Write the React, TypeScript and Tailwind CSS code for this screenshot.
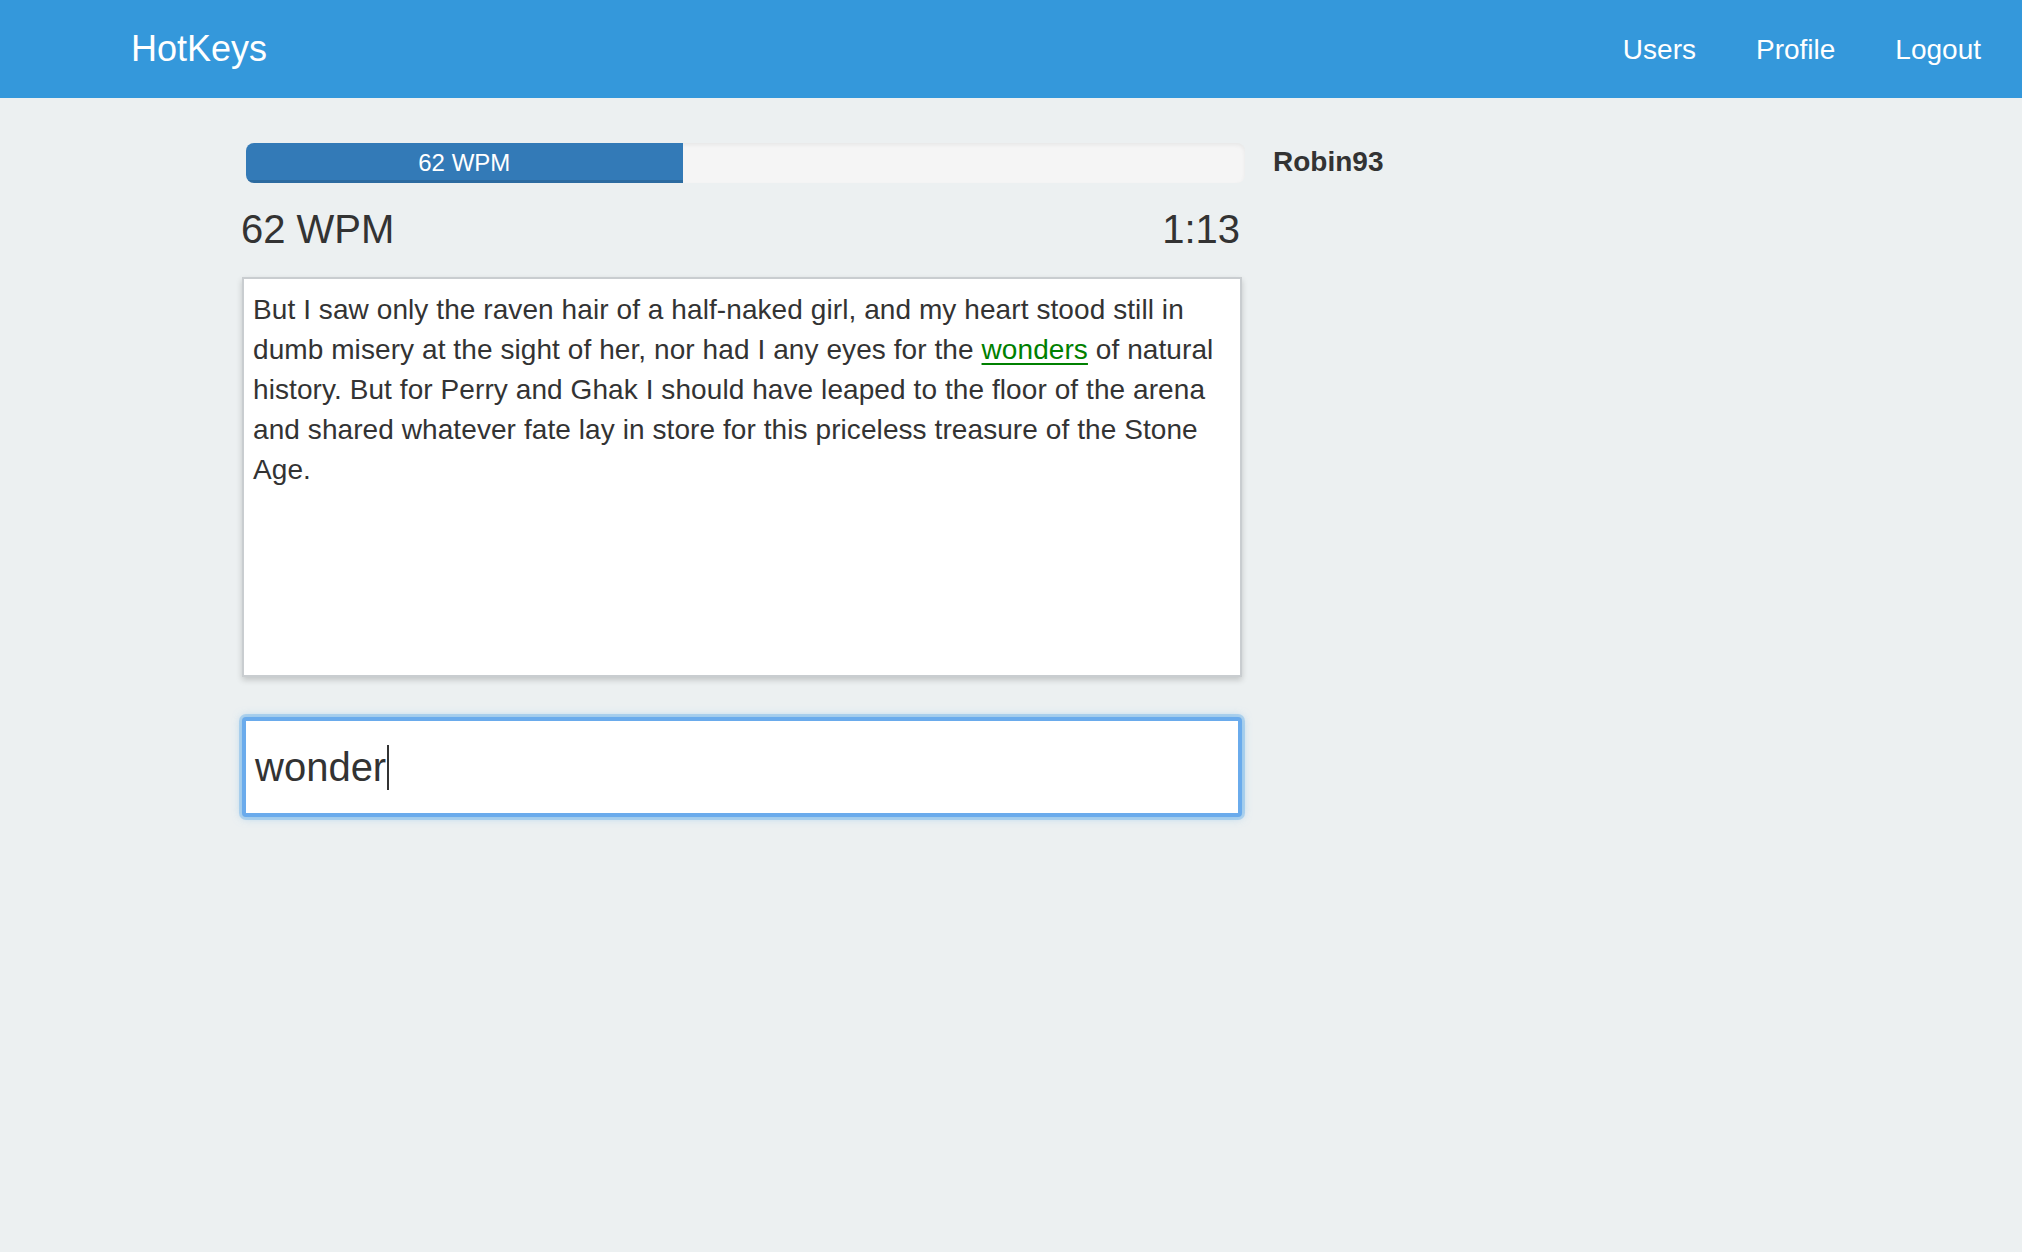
import React from 'react';

const font = { fontFamily: '"Liberation Sans", Arial, Helvetica, sans-serif' };

const passage = {
  before:
    'But I saw only the raven hair of a half-naked girl, and my heart stood still in dumb misery at the sight of her, nor had I any eyes for the ',
  current: 'wonders',
  after:
    ' of natural history. But for Perry and Ghak I should have leaped to the floor of the arena and shared whatever fate lay in store for this priceless treasure of the Stone Age.',
};

const Navbar = () => (
  <nav className="h-[98px] bg-[#3498db] flex items-center justify-between pl-[131px] pr-[11px]">
    <span className="text-[36px] leading-none text-white">HotKeys</span>
    <ul className="flex items-center">
      {['Users', 'Profile', 'Logout'].map((item) => (
        <li key={item}>
          <a href="#" className="block px-[30px] pt-[1px] text-[28px] leading-[40px] text-white">
            {item}
          </a>
        </li>
      ))}
    </ul>
  </nav>
);

const ProgressBar = ({ wpm, percent }: { wpm: number; percent: number }) => (
  <div className="ml-[4px] h-[40px] w-[999px] rounded-[8px] bg-[#f5f5f5] shadow-[inset_0_2px_4px_rgba(0,0,0,0.06)] overflow-hidden flex">
    <div
      className="h-full bg-[#337ab7] shadow-[inset_0_-3px_0_rgba(0,0,0,0.12)] text-white text-[24px] leading-[40px] text-center"
      style={{ width: `${percent}%` }}
    >
      {wpm} WPM
    </div>
  </div>
);

export default function App() {
  return (
    <div className="min-h-screen bg-[#ecf0f1] text-[#333333]" style={font}>
      <Navbar />

      <main className="pt-[45px] pl-[242px] flex gap-[31px]">
        <div className="w-[1000px]">
          <ProgressBar wpm={62} percent={43.7} />

          <div className="mt-[24px] flex justify-between pr-[2px] text-[40px] leading-[44px]">
            <span className="-ml-[1px]">62 WPM</span>
            <span>1:13</span>
          </div>

          <div className="mt-[26px] h-[400px] bg-white border-2 border-[#c9cdd0] shadow-[0_3px_6px_rgba(0,0,0,0.18)] pl-[9px] pr-[8px] pt-[11px] text-[28px] leading-[40px] tracking-[0.08px]">
            {passage.before}
            <span className="text-[#008000] underline underline-offset-[4px] decoration-[2px]">
              {passage.current}
            </span>
            {passage.after}
          </div>

          <div className="mt-[40px] h-[100px] bg-white border-[4px] border-[#6aabec] shadow-[0_0_0_3px_rgba(102,175,233,0.4),0_0_10px_rgba(102,175,233,0.6)] rounded-[4px] flex items-center pl-[9px]">
            <span className="text-[40px] leading-[46px]">wonder</span>
            <span className="ml-[1px] w-[2px] h-[45px] bg-[#333333]" />
          </div>
        </div>

        <div className="-mt-[1px]">
          <span className="block text-[28px] leading-[40px] font-bold">Robin93</span>
        </div>
      </main>
    </div>
  );
}
